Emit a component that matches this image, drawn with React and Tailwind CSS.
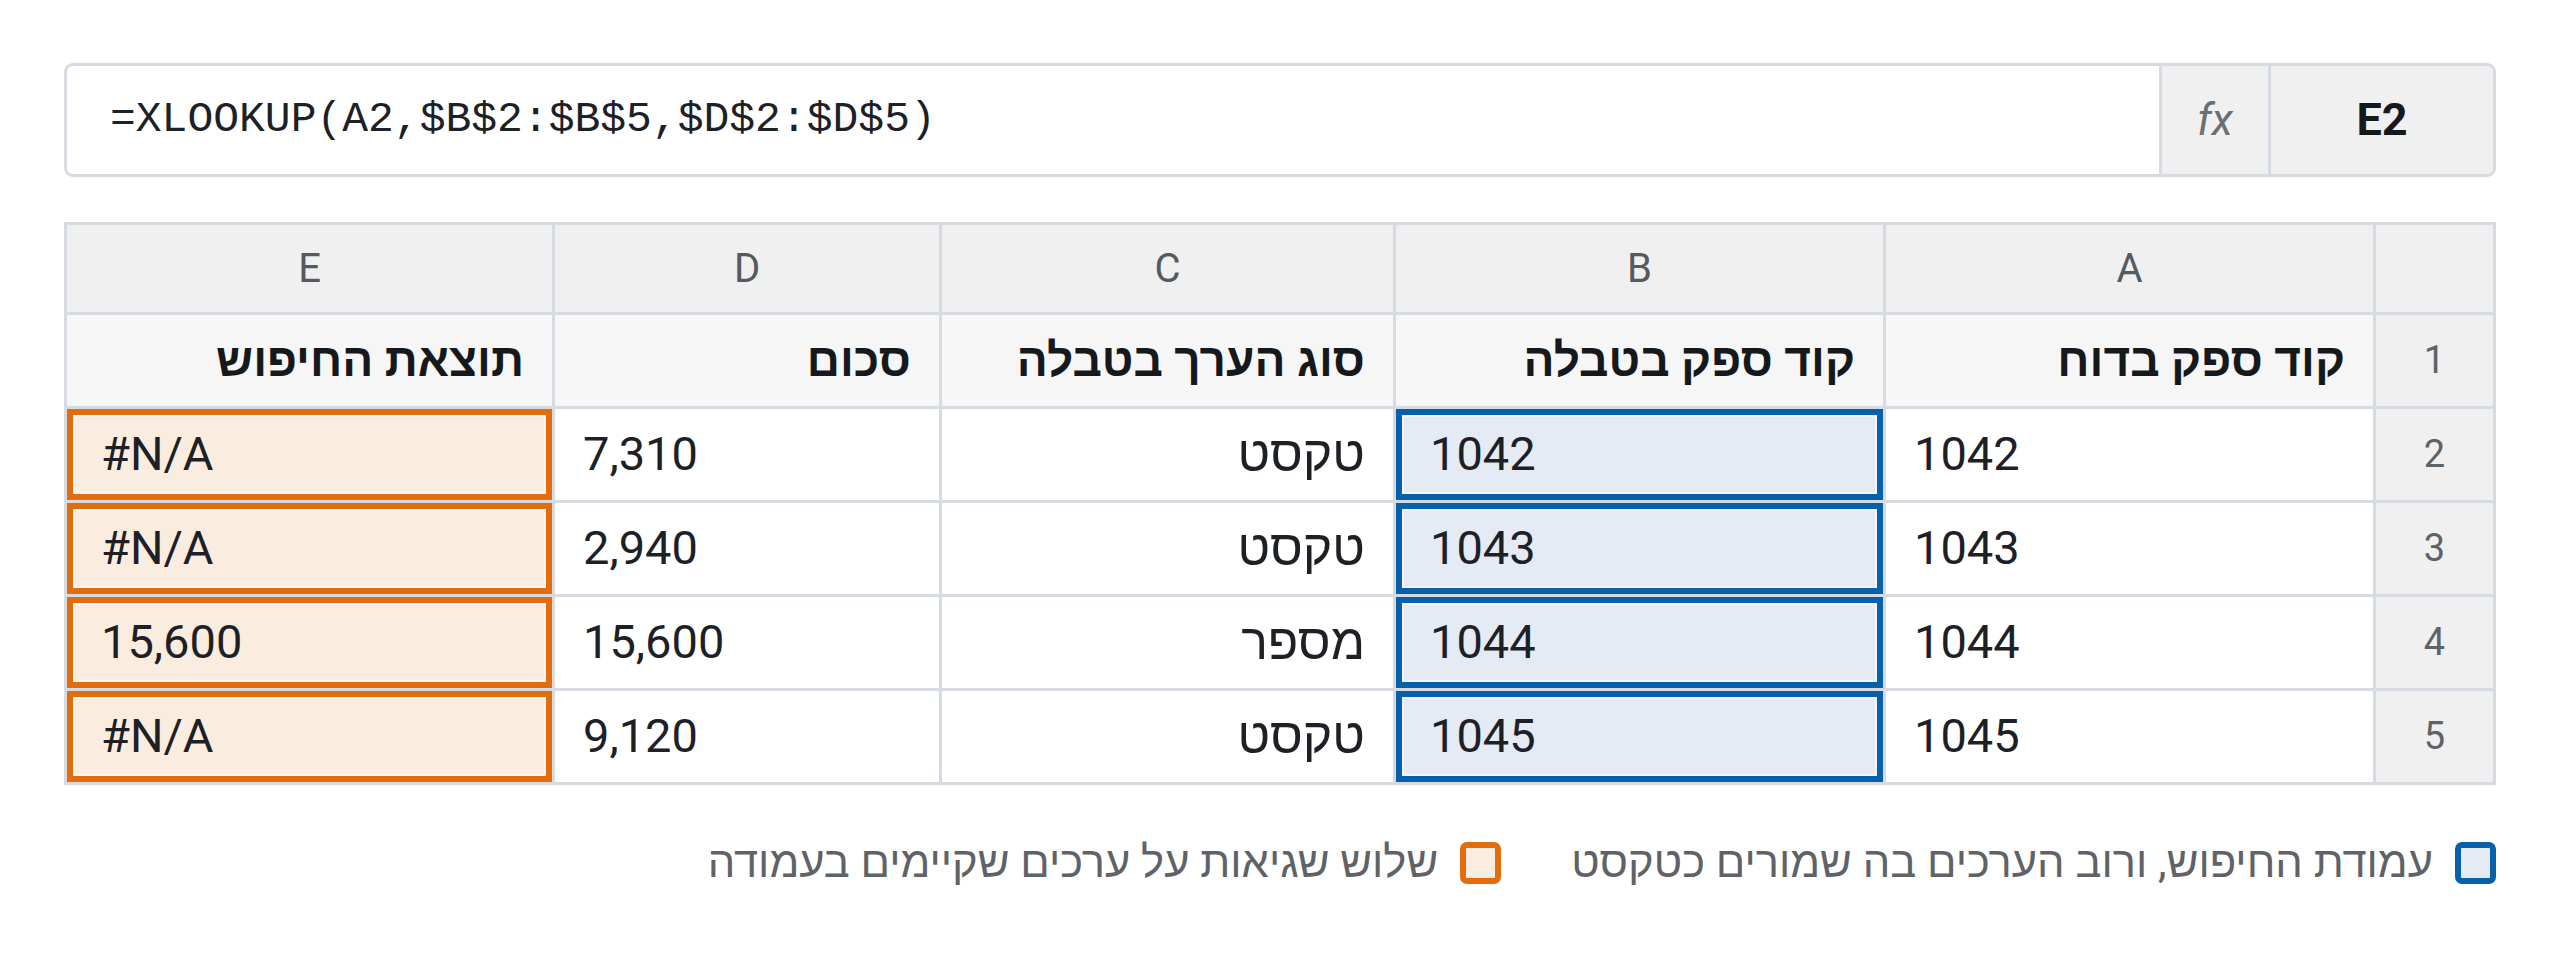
const columns = ['A', 'B', 'C', 'D', 'E'];

const headerRow = ['קוד ספק בדוח', 'קוד ספק בטבלה', 'סוג הערך בטבלה', 'סכום', 'תוצאת החיפוש'];

const rows = [
  { n: 2, a: '1042', b: '1042', c: 'טקסט', d: '7,310', e: '#N/A' },
  { n: 3, a: '1043', b: '1043', c: 'טקסט', d: '2,940', e: '#N/A' },
  { n: 4, a: '1044', b: '1044', c: 'מספר', d: '15,600', e: '15,600' },
  { n: 5, a: '1045', b: '1045', c: 'טקסט', d: '9,120', e: '#N/A' },
];

const sans = { fontFamily: 'Roboto, sans-serif' };

function Cell({ children, className = '', ltr = false }) {
  return (
    <div dir={ltr ? 'ltr' : undefined} className={`flex items-center px-[28px] ${className}`}>
      {children}
    </div>
  );
}

export default function App() {
  return (
    <div
      dir="rtl"
      className="min-h-screen bg-white px-[64px] pt-[63px] text-[#1d2126]"
      style={sans}
    >
      {/* Formula bar */}
      <div className="flex h-[114px] overflow-hidden rounded-[9px] border-[3px] border-[#d5dbe1]">
        <div className="flex w-[222px] items-center justify-center bg-[#f0f0f0] text-[45px] font-bold text-[#16191c]">
          E2
        </div>
        <div className="flex w-[112px] items-center justify-center border-x-[3px] border-[#d5dbe1] bg-[#f0f0f0] text-[44px] italic text-[#6b7075]">
          fx
        </div>
        <div
          dir="ltr"
          className="flex flex-1 items-center bg-white pl-[43px] text-[43px] text-[#1d2126]"
          style={{ fontFamily: '"Liberation Mono", monospace' }}
        >
          =XLOOKUP(A2,$B$2:$B$5,$D$2:$D$5)
        </div>
      </div>

      {/* Sheet */}
      <div className="mt-[45px] grid grid-cols-[117px_487px_487px_451px_384px_1fr] gap-[3px] border-[3px] border-[#d5dbe1] bg-[#d5dbe1]">
        {/* column letters */}
        <div className="h-[87px] bg-[#f0f0f0]" />
        {columns.map((c) => (
          <div key={c} className="flex h-[87px] items-center justify-center bg-[#f0f0f0] text-[40px] text-[#545a60]">
            {c}
          </div>
        ))}

        {/* row 1 */}
        <div className="flex h-[91px] items-center justify-center bg-[#f0f0f0] text-[38px] text-[#5d6369]">1</div>
        {headerRow.map((h) => (
          <Cell key={h} className="h-[91px] bg-[#f6f6f6] text-[46px] font-bold text-[#16191c]">
            {h}
          </Cell>
        ))}

        {/* data rows */}
        {rows.map((r) => [
          <div key={`n${r.n}`} className="flex h-[91px] items-center justify-center bg-[#f0f0f0] text-[38px] text-[#5d6369]">
            {r.n}
          </div>,
          <Cell key={`a${r.n}`} ltr className="h-[91px] bg-white text-[47px]">
            {r.a}
          </Cell>,
          <Cell
            key={`b${r.n}`}
            ltr
            className="h-[91px] border-[6px] border-[#0660aa] bg-[#e4ebf4] px-[22px] text-[47px] shadow-[inset_0_0_0_2px_#f2f5f9]"
          >
            {r.b}
          </Cell>,
          <Cell key={`c${r.n}`} className="h-[91px] bg-white text-[50px]">
            {r.c}
          </Cell>,
          <Cell key={`d${r.n}`} ltr className="h-[91px] bg-white text-[47px]">
            {r.d}
          </Cell>,
          <Cell
            key={`e${r.n}`}
            ltr
            className="h-[91px] border-[6px] border-[#e36c0c] bg-[#fbece0] px-[22px] text-[47px] shadow-[inset_0_0_0_2px_#fdf5ef]"
          >
            {r.e}
          </Cell>,
        ])}
      </div>

      {/* Legend */}
      <div className="mt-[45px] flex items-center gap-[70px] text-[43.5px] text-[#5f6368]">
        <div className="flex items-center gap-[22px]">
          <span className="h-[42px] w-[41px] rounded-[7px] border-[6px] border-[#0660aa] bg-[#e4ebf4]" />
          <span>עמודת החיפוש, ורוב הערכים בה שמורים כטקסט</span>
        </div>
        <div className="flex items-center gap-[22px]">
          <span className="h-[42px] w-[41px] rounded-[7px] border-[6px] border-[#e36c0c] bg-[#fbece0]" />
          <span>שלוש שגיאות על ערכים שקיימים בעמודה</span>
        </div>
      </div>
    </div>
  );
}
